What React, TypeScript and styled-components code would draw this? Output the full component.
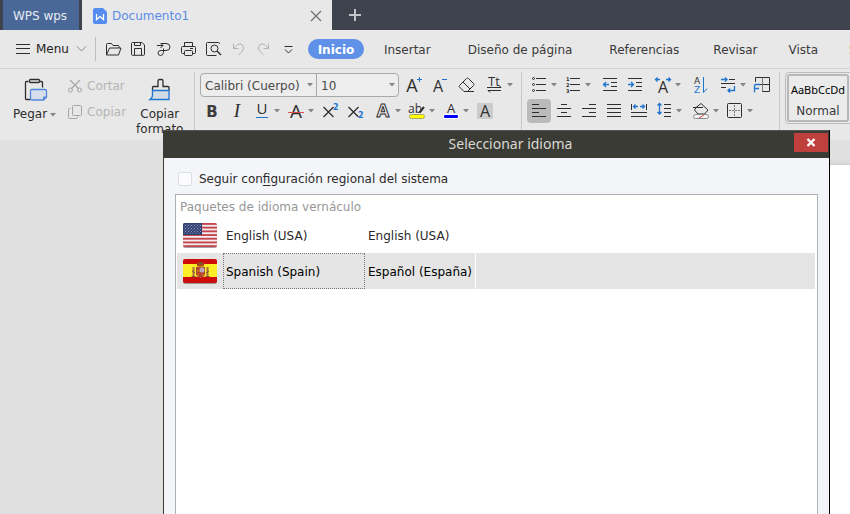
import React, { ReactNode, useState } from 'react';
import styled, { createGlobalStyle, css } from 'styled-components';

const ink = '#2f2f2f';
const blue = '#1f74d0';
const chrome = '#e8e8e8';

const GlobalStyle = createGlobalStyle`
  * { box-sizing: border-box; }
  html, body, #root { height: 100%; }
  body {
    margin: 0;
    overflow: hidden;
    background: #e0e0e0;
    font-family: "DejaVu Sans", sans-serif;
    font-size: 12px;
    line-height: 14px;
    color: #3a3a3a;
  }
  button, select, input { font: inherit; color: inherit; margin: 0; }
  button { border: 0; padding: 0; background: none; white-space: nowrap; }
`;

const Window = styled.div`
  position: relative;
  display: flex;
  flex-direction: column;
  height: 100%;
  overflow: hidden;
`;

/* Document tabs */
const TabStrip = styled.header`
  display: flex;
  flex: none;
  height: 30px;
  padding-left: 3px;
  background: #3f434e;
`;

const HomeTab = styled.button`
  width: 76px;
  margin-right: 3px;
  padding: 2px 2px 0 0;
  background: #496797;
  color: #e6ebf3;
`;

const DocumentTab = styled.div`
  display: flex;
  align-items: center;
  width: 250px;
  padding: 2px 8px 0 11px;
  background: ${chrome};
`;

const DocumentName = styled.button`
  display: flex;
  align-items: center;
  gap: 5px;
  margin-right: auto;
  color: #5b8de8;
`;

const TabAction = styled.button`
  display: flex;
  align-items: center;
  justify-content: center;
  width: 16px;
  height: 100%;
`;

const NewTab = styled(TabAction)`
  width: 46px;
`;

/* Menu bar */
const MenuBar = styled.div`
  display: flex;
  flex: none;
  align-items: center;
  height: 39px;
  padding-left: 16px;
  background: ${chrome};
  border-bottom: 1px solid #d3d3d3;
`;

const MenuButton = styled.button`
  display: flex;
  align-items: center;
  gap: 6px;
  margin-right: 8px;
  color: #222;
`;

const BarSeparator = styled.span`
  flex: none;
  width: 1px;
  height: 24px;
  margin-right: 5px;
  background: #bdbdbd;
`;

const QuickTools = styled.div`
  display: flex;
  flex: none;
  gap: 1px;
  margin-right: 8px;
`;

const RibbonTabs = styled.nav`
  display: flex;
  flex: 1;
  gap: 1px;
  min-width: 0;
  overflow: hidden;
`;

const RibbonTab = styled.button<{ $active?: boolean; $tight?: boolean }>`
  flex: none;
  height: 20px;
  padding: 2px ${p => (p.$tight ? 15 : 18)}px 0;
  ${p =>
    p.$active &&
    css`
      width: 56px;
      margin-right: 1px;
      padding: 2px 0 0;
      border-radius: 10px;
      background: #5f91e8;
      color: #fff;
      font-weight: bold;
    `}
`;

/* Ribbon */
const Ribbon = styled.div`
  display: flex;
  flex: none;
  height: 71px;
  padding-top: 3px;
  background: ${chrome};
  overflow: hidden;
`;

const Group = styled.section`
  flex: none;
  padding: 1px 5px 0;
  border-right: 1px solid #c8c8c8;
`;

const ClipboardGroup = styled(Group)`
  display: flex;
  width: 195px;
  padding: 0 0 0 13px;
`;

const LargeTool = styled.button`
  display: flex;
  flex-direction: column;
  align-items: center;
  gap: 5px;
  padding-top: 6px;
  align-self: flex-start;
  color: #2c2c2c;
`;

const LargeLabel = styled.span`
  display: flex;
  align-items: center;
  gap: 3px;
  width: min-content;
  line-height: 15px;
  white-space: normal;
`;

const SmallTools = styled.div`
  display: flex;
  flex-direction: column;
  gap: 2px;
  margin: 2px 10px 0 11px;
`;

const SmallTool = styled.button`
  display: flex;
  align-items: center;
  gap: 4px;
  height: 24px;
  color: #b5b5b5;
`;

const ToolRow = styled.div`
  display: flex;
  gap: 1px;
  margin-bottom: 2px;
`;

const IconButton = styled.button<{ $pressed?: boolean; $apart?: boolean }>`
  display: block;
  flex: none;
  width: 24px;
  height: 24px;
  margin-left: ${p => (p.$apart ? 3 : 0)}px;
  border-radius: 4px;
  background: ${p => (p.$pressed ? '#bababa' : 'none')};
`;

const Split = styled.span<{ $apart?: boolean }>`
  display: flex;
  flex: none;
  width: 33px;
  margin-left: ${p => (p.$apart ? 3 : 0)}px;
`;

const ArrowButton = styled.button`
  display: flex;
  align-items: center;
  width: 9px;
  height: 24px;
`;

const FontBoxes = styled.div`
  display: grid;
  grid-template-columns: 115px 82px;
  margin-right: 2px;
  height: 24px;
  border: 1px solid #a9a9a9;
  border-radius: 4px;
  background: #ededed;
`;

const Combo = styled.label`
  display: grid;
  align-items: center;
  & + & { border-left: 1px solid #a9a9a9; }
  > * { grid-area: 1 / 1; }
  > svg { justify-self: end; margin-right: 3px; pointer-events: none; }
`;

const ComboSelect = styled.select`
  appearance: none;
  width: 100%;
  height: 22px;
  padding: 2px 0 0 4px;
  border: 0;
  background: none;
  color: #4a4a4a;
`;

const Gallery = styled.div`
  flex: none;
  height: 52px;
  margin: 0 0 0 5px;
  padding: 1px 8px 1px 1px;
  border: 1px solid #bdbdbd;
  border-radius: 4px;
`;

const StyleCard = styled.button`
  display: flex;
  flex-direction: column;
  justify-content: space-between;
  align-items: center;
  width: 62px;
  height: 48px;
  padding: 7px 0 2px;
  border: 2px solid #b8b8b8;
  border-radius: 3px;
  background: #ebebeb;
`;

const StyleSample = styled.span`
  font: 11px "Noto Sans", sans-serif;
  line-height: 14px;
  color: #000;
`;

/* Workspace */
const Workspace = styled.main`
  flex: 1;
  padding: 25px 0 0 200px;
`;

const Paper = styled.div`
  height: 100%;
  background: #fff;
  box-shadow: 0 0 5px #bbb;
`;

/* Language dialog */
const Dialog = styled.section`
  position: absolute;
  inset: 130px 20px -40px 163px;
  display: flex;
  flex-direction: column;
  border: solid #3b3b36;
  border-width: 0 1px;
  border-right-color: #000;
  background: #f4f5f8;
  color: #2a2a2a;
`;

const DialogHeader = styled.header`
  display: flex;
  flex: none;
  align-items: flex-start;
  height: 28px;
  padding: 1px 1px 0 63px;
  border-top: 1px solid #555650;
  background: #3b3b36;
`;

const DialogTitle = styled.h1`
  flex: 1;
  margin: 0;
  font: 14px "Noto Sans", sans-serif;
  line-height: 24px;
  text-align: center;
  color: #d9d8d2;
`;

const DialogClose = styled.button`
  display: flex;
  align-items: center;
  justify-content: center;
  width: 34px;
  height: 19px;
  margin-top: 1px;
  background: #c0403e;
`;

const DialogBody = styled.div`
  display: flex;
  flex: 1;
  flex-direction: column;
  padding: 14px 11px 0;
`;

const Check = styled.label`
  display: flex;
  align-items: center;
  gap: 7px;
  height: 14px;
  margin: 0 0 8px 3px;
  u { text-underline-offset: 2px; }
`;

const CheckBox = styled.input`
  appearance: none;
  width: 14px;
  height: 14px;
  border: 1px solid #dcdee8;
  border-radius: 2px;
  background: #fbfbfd;
  &:checked { background: #5f91e8; }
`;

const ListBox = styled.div`
  flex: 1;
  padding: 0 2px 0 1px;
  border: 1px solid #aeb0b4;
  background: #fff;
`;

const Languages = styled.table`
  width: 100%;
  table-layout: fixed;
  border-collapse: separate;
  border-spacing: 0;
  caption {
    height: 22px;
    padding: 5px 0 0 3px;
    text-align: left;
    color: #979797;
  }
`;

const LanguageRow = styled.tr<{ $selected?: boolean }>`
  height: 36px;
  color: ${p => (p.$selected ? '#000' : '#2a2a2a')};
  background: ${p => (p.$selected ? '#e5e5e5' : '#fff')};
`;

const Cell = styled.td<{ $focus?: boolean; $divided?: boolean }>`
  padding: 2px 2px 0;
  border: 1px solid transparent;
  white-space: nowrap;
  ${p => p.$focus && css`border: 1px dotted #777;`}
  ${p => p.$divided && css`border-right: 1px solid #fff;`}
`;

const FlagCell = styled(Cell)`
  padding: 0 4px;
  line-height: 0;
`;

const Drawing = styled.svg`
  display: block;
  flex: none;
  overflow: visible;
`;

const Letter = styled.text`
  font-family: "Open Sans", sans-serif;
`;

function Icon({ children, w = 24, h = 24, color = ink }: { children: ReactNode; w?: number; h?: number; color?: string }) {
  return (
    <Drawing width={w} height={h} viewBox={`0 0 ${w} ${h}`} fill="none" stroke={color} aria-hidden="true">
      {children}
    </Drawing>
  );
}

const Caret = () => (
  <Drawing width="6" height="4" viewBox="0 0 6 4" aria-hidden="true">
    <path d="M0 0h6L3 3.5z" fill="#858585" />
  </Drawing>
);

function Glyph({ x, y, size, fill = ink, children }: { x: number; y: number; size: number; fill?: string; children: ReactNode }) {
  return (
    <Letter x={x} y={y} fontSize={size} fill={fill} stroke="none" textAnchor="middle">
      {children}
    </Letter>
  );
}

type ToolProps = { label: string; children: ReactNode; menu?: boolean; apart?: boolean; pressed?: boolean; color?: string };

function Tool({ label, children, menu, apart, pressed, color }: ToolProps) {
  const button = (
    <IconButton aria-label={label} aria-pressed={pressed} $pressed={pressed} $apart={apart && !menu}>
      <Icon color={color}>{children}</Icon>
    </IconButton>
  );
  if (!menu) return button;
  return (
    <Split $apart={apart}>
      {button}
      <ArrowButton aria-label={`${label}: opciones`}><Caret /></ArrowButton>
    </Split>
  );
}

const UsFlag = () => (
  <Drawing width="36" height="27" viewBox="0 0 36 27" aria-label="Estados Unidos" role="img">
    <defs>
      <clipPath id="us"><rect x="1" y="1" width="34" height="24" rx="2" /></clipPath>
      <pattern id="stars" width="3" height="3" patternUnits="userSpaceOnUse">
        <rect width="1" height="1" fill="#8d9abd" /><rect x="1.5" y="1.5" width="1" height="1" fill="#8d9abd" />
      </pattern>
    </defs>
    <rect x="1" y="2" width="34" height="24" rx="2" fill="#a4a4a4" />
    <g clipPath="url(#us)">
      <rect width="36" height="26" fill="#f3eded" />
      {[0, 1, 2, 3, 4, 5, 6].map(i => <rect key={i} x="0" y={1 + i * 3.7} width="36" height="1.85" fill="#c4434d" />)}
      <rect x="1" y="1" width="19" height="12" fill="#2f4272" />
      <rect x="2" y="2" width="17" height="10" fill="url(#stars)" />
    </g>
  </Drawing>
);

const SpainFlag = () => (
  <Drawing width="36" height="27" viewBox="0 0 36 27" aria-label="España" role="img">
    <defs><clipPath id="es"><rect x="1" y="1" width="34" height="24" rx="2" /></clipPath></defs>
    <rect x="1" y="2" width="34" height="24" rx="2" fill="#999" />
    <g clipPath="url(#es)">
      <rect width="36" height="26" fill="#cf0c0c" />
      <rect y="6" width="36" height="13" fill="#fbee26" />
      <path d="M14 9h9v7q-1 4-4.500 4q-3.500 0-4.500-4z" fill="#b5452c" />
      <path d="M14.500 5.500q4-3 8 0l-1 3h-6z" fill="#a3461c" />
      <path d="M11.500 9v10M25.500 9v10" stroke="#b06a3c" strokeWidth="2" />
      <path d="M9.500 18.500h4M23.500 18.500h4M10 13l3 2M27 13l-3 2" stroke="#7c5a3c" />
      <circle cx="20" cy="12" r="2.500" fill="#b9a9b8" />
      <path d="M15 13h3M20 17h2M16 16v2" stroke="#d88b2a" />
      <circle cx="18.500" cy="5" r="1" fill="#37713c" />
    </g>
  </Drawing>
);

const languages = [
  { english: 'English (USA)', native: 'English (USA)', Flag: UsFlag },
  { english: 'Spanish (Spain)', native: 'Español (España)', Flag: SpainFlag },
];

function ClipboardTools() {
  return (
    <ClipboardGroup aria-label="Portapapeles">
      <LargeTool>
        <Icon w={24} h={24}>
          <path d="M5.500 3.500h-2q-1 0-1 1v16q0 1 1 1h4M16.500 3.500h2q1 0 1 1v5" strokeWidth="1.300" />
          <rect x="6.500" y="1.500" width="10" height="3" rx="1" strokeWidth="1.300" />
          <path d="M9 11.500h13q1.500 0 1.500 1.500v6l-3 3H9q-1.500 0-1.500-1.500V13q0-1.500 1.500-1.500z" stroke="#4f86dc" fill="#d6deeb" strokeWidth="1.300" />
          <path d="M23.500 19h-3v3z" fill="#4f86dc" stroke="#4f86dc" />
        </Icon>
        <LargeLabel>Pegar <Caret /></LargeLabel>
      </LargeTool>
      <SmallTools>
        <SmallTool disabled>
          <Icon w={16} h={16} color="#a6a6a6">
            <path d="M3 2l9 9M13 2l-9 9" strokeWidth="1.200" />
            <circle cx="3.500" cy="12" r="2" /><circle cx="12.500" cy="12" r="2" />
          </Icon>
          Cortar
        </SmallTool>
        <SmallTool disabled>
          <Icon w={16} h={16} color="#a6a6a6">
            <rect x="5.500" y="1.500" width="9" height="10" rx="1" />
            <path d="M3.500 4.500h-1q-1 0-1 1v8q0 1 1 1h7q1 0 1-1v-1" />
          </Icon>
          Copiar
        </SmallTool>
      </SmallTools>
      <LargeTool>
        <Icon w={24} h={24}>
          <path d="M4 12.500h17v9H2q2-2 2-5z" fill="#d3dce6" stroke="none" />
          <path d="M4.500 12.500v-3q0-1 1-1h4.500V3q0-1.500 1.500-1.500h2q1.500 0 1.500 1.500v5.500H20q1 0 1 1v3" strokeWidth="1.300" />
          <path d="M4.500 12.500h16.500v9H2q2.500-2 2.500-4z" stroke={blue} strokeWidth="1.300" />
        </Icon>
        <LargeLabel>Copiar formato</LargeLabel>
      </LargeTool>
    </ClipboardGroup>
  );
}

function FontTools() {
  return (
    <Group aria-label="Fuente">
      <ToolRow>
        <FontBoxes>
          <Combo>
            <ComboSelect aria-label="Fuente"><option>Calibri (Cuerpo)</option></ComboSelect>
            <Caret />
          </Combo>
          <Combo>
            <ComboSelect aria-label="Tamaño de fuente"><option>10</option></ComboSelect>
            <Caret />
          </Combo>
        </FontBoxes>
        <Tool label="Aumentar fuente">
          <Glyph x={10} y={19} size={18}>A</Glyph>
          <path d="M15 6.500h5M17.500 4v5" stroke={blue} />
        </Tool>
        <Tool label="Reducir fuente">
          <Glyph x={11} y={19} size={16}>A</Glyph>
          <path d="M15 6.500h5" stroke={blue} />
        </Tool>
        <Tool label="Borrar formato" apart>
          <path d="M4.500 12.500l7-7q1-1 2 0l5 5q1 1 0 2l-6 6H9l-4.500-4.500q-.800-.700 0-1.500zM8 9l7 7M9 18.500h10" />
        </Tool>
        <Tool label="Efectos de texto" menu apart>
          <path d="M4 14.500h14l-2-2M18 17.500H5l2 2" />
          <Glyph x={11} y={13} size={13}>Tt</Glyph>
        </Tool>
      </ToolRow>
      <ToolRow>
        <Tool label="Negrita">
          <text x="12" y="18" fontSize="15" fontWeight="bold" textAnchor="middle" fill="#3d3d3d" stroke="none">B</text>
        </Tool>
        <Tool label="Cursiva">
          <text x="12" y="18" fontFamily="Liberation Serif, serif" fontSize="19" fontStyle="italic" textAnchor="middle" fill={ink} stroke="none">I</text>
        </Tool>
        <Tool label="Subrayado" menu>
          <Glyph x={12} y={15} size={15}>U</Glyph>
          <path d="M6 18.500h12" stroke={blue} />
        </Tool>
        <Tool label="Tachado" menu>
          <Glyph x={12} y={19} size={19}>A</Glyph>
          <path d="M4 13.500h16" stroke="#dc4a50" />
        </Tool>
        <Tool label="Superíndice">
          <path d="M5.500 8l10 10M15.500 8l-10 10" strokeWidth="1.300" />
          <text x="15" y="11" fontSize="8" fontWeight="bold" fill={blue} stroke="none">2</text>
        </Tool>
        <Tool label="Subíndice">
          <path d="M5.500 8l10 10M15.500 8l-10 10" strokeWidth="1.300" />
          <text x="15" y="19" fontSize="8" fontWeight="bold" fill={blue} stroke="none">2</text>
        </Tool>
        <Tool label="Relleno de texto" menu apart>
          <text x="12" y="18" fontFamily="Open Sans, sans-serif" fontSize="18" fontWeight="bold" textAnchor="middle" fill="none" strokeWidth="1">A</text>
        </Tool>
        <Tool label="Resaltado" menu>
          <rect x="4.500" y="15.500" width="15" height="4" rx="2" fill="#ff0" stroke="#a8a860" />
          <Glyph x={10} y={14} size={12}>ab</Glyph>
          <path d="M19 8l-4.500 5.500" strokeWidth="2" />
        </Tool>
        <Tool label="Color de fuente" menu>
          <Glyph x={12} y={14} size={13}>A</Glyph>
          <rect x="4" y="15" width="16" height="5" rx="2" fill="#fff" stroke="none" />
          <rect x="5" y="16" width="14" height="3" rx="1" fill="#00f" stroke="none" />
        </Tool>
        <Tool label="Sombreado de texto">
          <rect x="4" y="4" width="16" height="16" rx="1" fill="#cbcbcb" stroke="none" />
          <Glyph x={12} y={18} size={16}>A</Glyph>
        </Tool>
      </ToolRow>
    </Group>
  );
}

function ParagraphTools() {
  return (
    <Group aria-label="Párrafo">
      <ToolRow>
        <Tool label="Viñetas" menu>
          {[5.5, 11.5, 17.5].map(y => (
            <React.Fragment key={y}><circle cx="6.500" cy={y} r="1" /><path d={`M9 ${y}h10`} /></React.Fragment>
          ))}
        </Tool>
        <Tool label="Numeración" menu>
          {[5.5, 11.5, 17.5].map((y, i) => (
            <React.Fragment key={y}>
              <text x="5" y={y + 2} fontSize="5" fontWeight="bold" fill={ink} stroke="none">{i + 1}</text>
              <path d={`M9 ${y}h10`} />
            </React.Fragment>
          ))}
        </Tool>
        <Tool label="Reducir sangría" apart>
          <path d="M5 5.500h14M13 9.500h6M13 13.500h6M5 17.500h14" />
          <path d="M11 11.500H5.500M8 9l-2.500 2.500L8 14" stroke={blue} strokeWidth="1.300" />
        </Tool>
        <Tool label="Aumentar sangría">
          <path d="M5 5.500h14M13 9.500h6M13 13.500h6M5 17.500h14" />
          <path d="M5 11.500h5.500M8 9l2.500 2.500L8 14" stroke={blue} strokeWidth="1.300" />
        </Tool>
        <Tool label="Escala de caracteres" menu apart>
          <Glyph x={12} y={20} size={16}>A</Glyph>
          <path d="M9 6.500H4.500M6.500 4.500l-2 2 2 2M15 6.500h4.500M17.500 4.500l2 2-2 2" stroke={blue} strokeWidth="1.300" />
        </Tool>
        <Tool label="Ordenar" apart>
          <text x="9" y="11" fontSize="9" textAnchor="middle" fill={ink} stroke="none">A</text>
          <text x="9" y="20" fontSize="9" textAnchor="middle" fill={blue} stroke="none">Z</text>
          <path d="M15.500 4v15.500l3.500-4" stroke={blue} />
        </Tool>
        <Tool label="Salto de línea" menu apart>
          <path d="M13 6.500h6M5 10.500h14M5 14.500h5" />
          <path d="M5 6.500h6M9 4.500l2 2-2 2M18.500 13v4.500H12M14 15.500l-2 2 2 2" stroke={blue} strokeWidth="1.300" />
        </Tool>
        <Tool label="Marco">
          <path d="M5.500 9V4.500h14v14H12M9 11.500h10.500" />
          <path d="M12.500 4.500v14" stroke="#777" />
          <path d="M10 11.500H5M4.500 19.500v-8M5 15.500h4" stroke={blue} strokeWidth="1.300" />
        </Tool>
      </ToolRow>
      <ToolRow>
        <Tool label="Alinear a la izquierda" pressed><path d="M5 5.500h7M5 9.500h14M5 13.500h7M5 17.500h14" /></Tool>
        <Tool label="Centrar"><path d="M9 5.500h6M5 9.500h14M9 13.500h6M5 17.500h14" /></Tool>
        <Tool label="Alinear a la derecha"><path d="M12 5.500h7M5 9.500h14M12 13.500h7M5 17.500h14" /></Tool>
        <Tool label="Justificar"><path d="M5 5.500h14M5 9.500h14M5 13.500h14M5 17.500h14" /></Tool>
        <Tool label="Distribuir">
          <path d="M4.500 5v6M19.500 5v6M4 13.500h16M4 17.500h16" />
          <path d="M11 7.500H6.500M8.500 5.500l-2 2 2 2M13 7.500h4.500M15.500 5.500l2 2-2 2" stroke={blue} strokeWidth="1.300" />
        </Tool>
        <Tool label="Interlineado" menu>
          <path d="M12 5.500h7M12 9.500h7M12 13.500h7M12 17.500h7" />
          <path d="M7.500 5v9.500M5.500 6.500l2-2 2 2M5.500 13l2 2 2-2" stroke={blue} strokeWidth="1.300" />
        </Tool>
        <Tool label="Sombreado" menu apart>
          <path d="M4 8.500h10M7 8.500l5-4 7 6.500-3.500 4H9l-3.500-4z" />
          <rect x="4.500" y="15.500" width="15" height="4" rx="2" fill="#f4f4f4" stroke="#8a8a8a" />
          <path d="M10 19l5-3" stroke="#dc4a50" />
        </Tool>
        <Tool label="Bordes" menu>
          <rect x="4.500" y="4.500" width="14" height="14" rx="1" />
          <path d="M11.500 6v11M6 11.500h11" stroke="#777" strokeDasharray="2 1" />
        </Tool>
      </ToolRow>
    </Group>
  );
}

function LanguageDialog() {
  const [followSystem, setFollowSystem] = useState(false);
  return (
    <Dialog role="dialog" aria-labelledby="dialog-title">
      <DialogHeader>
        <DialogTitle id="dialog-title">Seleccionar idioma</DialogTitle>
        <DialogClose aria-label="Cerrar">
          <Icon w={10} h={10} color="#fff"><path d="M1.500 1l7 7M8.500 1l-7 7" strokeWidth="2.400" /></Icon>
        </DialogClose>
      </DialogHeader>
      <DialogBody>
        <Check>
          <CheckBox type="checkbox" checked={followSystem} onChange={e => setFollowSystem(e.target.checked)} />
          <span>Seguir con<u>f</u>iguración regional del sistema</span>
        </Check>
        <ListBox>
          <Languages>
            <caption>Paquetes de idioma vernáculo</caption>
            <colgroup>
              <col width="46" /><col width="142" /><col width="111" /><col />
            </colgroup>
            <tbody>
              {languages.map(({ english, native, Flag }, i) => (
                <LanguageRow key={english} $selected={i === 1} aria-selected={i === 1}>
                  <FlagCell><Flag /></FlagCell>
                  <Cell $focus={i === 1}>{english}</Cell>
                  <Cell $divided={i === 1}>{native}</Cell>
                  <Cell />
                </LanguageRow>
              ))}
            </tbody>
          </Languages>
        </ListBox>
      </DialogBody>
    </Dialog>
  );
}

export default function App() {
  return (
    <>
      <GlobalStyle />
      <Window>
        <TabStrip>
          <HomeTab>WPS wps</HomeTab>
          <DocumentTab>
            <DocumentName>
              <Icon w={14} h={16}>
                <path d="M2 0h8l4 4v10q0 2-2 2H2q-2 0-2-2V2q0-2 2-2z" fill="#548cf0" stroke="none" />
                <path d="M3.500 6v5.500l3.500-3 3.500 3V6" stroke="#fff" strokeWidth="1.300" />
              </Icon>
              Documento1
            </DocumentName>
            <TabAction aria-label="Cerrar pestaña">
              <Icon w={12} h={12} color="#6f6f6f"><path d="M1 1l10 10M11 1L1 11" strokeWidth="1.200" /></Icon>
            </TabAction>
          </DocumentTab>
          <NewTab aria-label="Nueva pestaña">
            <Icon w={12} h={12} color="#c3c4c8"><path d="M0 6h12M6 0v12" strokeWidth="2" /></Icon>
          </NewTab>
        </TabStrip>

        <MenuBar>
          <MenuButton>
            <Icon w={14} h={12}><path d="M0 1.500h14M0 5.500h14M0 10.500h14" /></Icon>
            Menu
            <Icon w={12} h={8} color="#8a8a8a"><path d="M2 1.500l4.500 4.500L11 1.500" /></Icon>
          </MenuButton>
          <BarSeparator />
          <QuickTools>
            <Tool label="Abrir">
              <path d="M5.500 18V7.500q0-1 1-1h4l1.500 2h5q1 0 1 1v1.500M5.500 18l3-7h11.500l-2.500 7z" strokeLinejoin="round" />
            </Tool>
            <Tool label="Guardar">
              <path d="M6.500 5.500h9.500l2.500 2.500v9.500q0 .800-1 .800H6.500q-1 0-1-1V6.500q0-1 1-1z" />
              <path d="M8.500 5.500v3h6v-3M8.500 18v-6.500h7V18" />
            </Tool>
            <Tool label="Exportar a PDF">
              <path d="M6 8.500h6M9.500 6l2.500 2.500L9.500 11M10 6.500h5q4 0 4 3.500t-4 3.500h-5q-3 0-3 2.500t2.500 2.500 3-3v-4" />
            </Tool>
            <Tool label="Imprimir">
              <path d="M8.500 9.500v-4h8v4M8 16.500H6.500q-1 0-1-1v-5q0-1 1-1h12q1 0 1 1v5q0 1-1 1H17" />
              <rect x="8.500" y="13.500" width="8" height="5" rx="1" /><path d="M14 11.500h3" />
            </Tool>
            <Tool label="Vista previa">
              <path d="M18.500 7V6.500q0-1-1-1h-11q-1 0-1 1v11q0 1 1 1h9" />
              <circle cx="13.500" cy="11.500" r="3.500" /><path d="M16 14l4 4" strokeWidth="1.500" />
            </Tool>
            <Tool label="Deshacer" color="#b3b3b3">
              <path d="M7.500 6.500v5h5M7.500 11.500l4-4q2.500-1.500 5 .500 2.500 3 0 6l-4 4" />
            </Tool>
            <Tool label="Rehacer" color="#b3b3b3">
              <path d="M17.500 6.500v5h-5M17.500 11.500l-4-4q-2.500-1.500-5 .500-2.500 3 0 6l4 4" />
            </Tool>
            <Tool label="Personalizar"><path d="M8.500 9.500h8M9 12.500l3.500 3.500 3.500-3.500" /></Tool>
          </QuickTools>
          <RibbonTabs>
            <RibbonTab $active>Inicio</RibbonTab>
            <RibbonTab>Insertar</RibbonTab>
            <RibbonTab>Diseño de página</RibbonTab>
            <RibbonTab>Referencias</RibbonTab>
            <RibbonTab $tight>Revisar</RibbonTab>
            <RibbonTab $tight>Vista</RibbonTab>
            <RibbonTab $tight>Sección</RibbonTab>
          </RibbonTabs>
        </MenuBar>

        <Ribbon>
          <ClipboardTools />
          <FontTools />
          <ParagraphTools />
          <Gallery>
            <StyleCard>
              <StyleSample>AaBbCcDd</StyleSample>
              Normal
            </StyleCard>
          </Gallery>
        </Ribbon>

        <Workspace><Paper /></Workspace>
        <LanguageDialog />
      </Window>
    </>
  );
}
